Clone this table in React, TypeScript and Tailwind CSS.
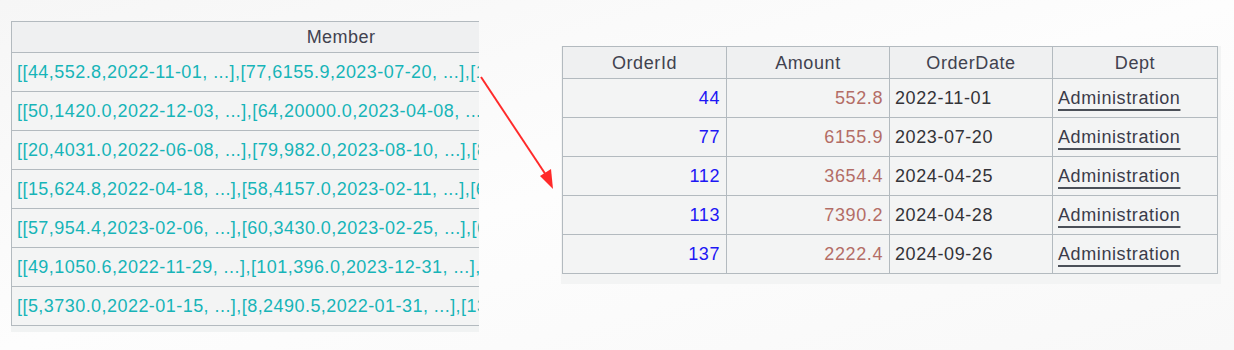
const members = [
  '[[44,552.8,2022-11-01, ...],[77,6155.9,2023-07-20, ...],[112,3654.4,2024-04-25, ...]]',
  '[[50,1420.0,2022-12-03, ...],[64,20000.0,2023-04-08, ...],[92,1200.0,2023-11-02, ...]]',
  '[[20,4031.0,2022-06-08, ...],[79,982.0,2023-08-10, ...],[88,3310.0,2023-10-11, ...]]',
  '[[15,624.8,2022-04-18, ...],[58,4157.0,2023-02-11, ...],[66,1834.0,2023-04-20, ...]]',
  '[[57,954.4,2023-02-06, ...],[60,3430.0,2023-02-25, ...],[63,2175.5,2023-04-01, ...]]',
  '[[49,1050.6,2022-11-29, ...],[101,396.0,2023-12-31, ...],[118,2890.0,2024-05-17, ...]]',
  '[[5,3730.0,2022-01-15, ...],[8,2490.5,2022-01-31, ...],[13,1520.0,2022-03-02, ...]]',
];

const orders = [
  { id: 44, amount: '552.8', date: '2022-11-01', dept: 'Administration' },
  { id: 77, amount: '6155.9', date: '2023-07-20', dept: 'Administration' },
  { id: 112, amount: '3654.4', date: '2024-04-25', dept: 'Administration' },
  { id: 113, amount: '7390.2', date: '2024-04-28', dept: 'Administration' },
  { id: 137, amount: '2222.4', date: '2024-09-26', dept: 'Administration' },
];

const font = { fontFamily: '"Liberation Sans", Arial, sans-serif' };

function MemberTable() {
  return (
    <div className="w-[468px] overflow-hidden bg-[#f1f3f3] pb-[6px]">
      <table className="w-[660px] border-collapse table-fixed text-[18px] tracking-[0.45px]">
        <thead>
          <tr className="h-[31px] bg-[#eff0f1]">
            <th className="border border-[#b3babf] font-normal text-[#41424f] text-center leading-none">Member</th>
          </tr>
        </thead>
        <tbody>
          {members.map((m, i) => (
            <tr key={i} className="h-[39px] bg-[#f3f4f4]">
              <td className="border border-[#b3babf] px-[5px] text-[#17b4b8] whitespace-nowrap overflow-hidden leading-none">{m}</td>
            </tr>
          ))}
        </tbody>
      </table>
    </div>
  );
}

function OrderTable() {
  return (
    <div className="bg-[#f3f4f4] pl-[1px] pr-[3px] pb-[10px]">
      <table className="w-[655px] border-collapse table-fixed text-[18px] tracking-[0.6px]">
        <colgroup>
          <col className="w-[164px]" />
          <col className="w-[163px]" />
          <col className="w-[163px]" />
          <col className="w-[165px]" />
        </colgroup>
        <thead>
          <tr className="h-[32px] bg-[#eff0f1]">
            {['OrderId', 'Amount', 'OrderDate', 'Dept'].map(h => (
              <th key={h} className="border border-[#b3babf] font-normal text-[#41424f] text-center leading-none">{h}</th>
            ))}
          </tr>
        </thead>
        <tbody>
          {orders.map(o => (
            <tr key={o.id} className="h-[39px] bg-[#f3f4f4]">
              <td className="border border-[#b3babf] px-[6px] text-right text-[#1d17f5] leading-none">{o.id}</td>
              <td className="border border-[#b3babf] px-[6px] text-right text-[#b36d66] leading-none">{o.amount}</td>
              <td className="border border-[#b3babf] px-[5px] text-left text-[#333338] leading-none">{o.date}</td>
              <td className="border border-[#b3babf] px-[5px] text-left leading-none">
                <span className="text-[#3b3c4a] underline decoration-[#4b5058] decoration-2 underline-offset-[5px]">{o.dept}</span>
              </td>
            </tr>
          ))}
        </tbody>
      </table>
    </div>
  );
}

export default function App() {
  return (
    <div className="relative w-[1234px] h-[350px] overflow-hidden bg-gradient-to-br from-[#f6f6f6] via-[#fdfdfd] to-[#f8f8f8]" style={font}>
      <div className="flex items-start pl-[11px] pt-[21px] gap-[82px]">
        <MemberTable />
        <div className="mt-[25px]">
          <OrderTable />
        </div>
      </div>
      <svg className="absolute left-[476px] top-[72px]" width="84" height="122" viewBox="0 0 84 122">
        <line x1="5" y1="5" x2="72" y2="106" stroke="#ff2a2a" strokeWidth="2" />
        <polygon points="77,117 64,104 75,97" fill="#ff2a2a" />
      </svg>
    </div>
  );
}
